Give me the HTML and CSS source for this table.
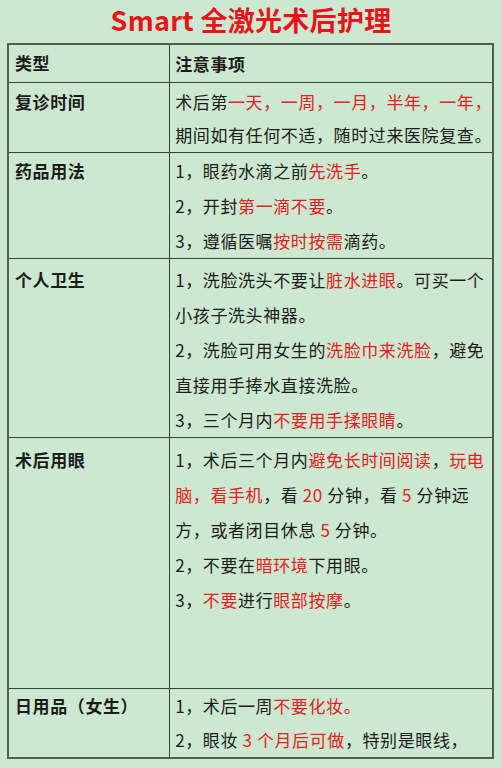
FILE: index.html
```html
<!DOCTYPE html>
<html lang="zh-CN">
<head>
<meta charset="utf-8">
<title>Smart 全激光术后护理</title>
<link rel="stylesheet" href="styles.css">
</head>
<body>
<h1 class="title">Smart 全激光术后护理</h1>
<table class="care">
  <tr class="head">
    <th class="c1">类型</th>
    <th class="c2">注意事项</th>
  </tr>
  <tr class="r1">
    <td class="c1">复诊时间</td>
    <td class="c2">
      <p>术后第<em>一天，一周，一月，半年，一年，</em><br>期间如有任何不适，随时过来医院复查。</p>
    </td>
  </tr>
  <tr class="r2">
    <td class="c1">药品用法</td>
    <td class="c2">
      <p>1，眼药水滴之前<em>先洗手</em>。</p>
      <p>2，开封<em>第一滴不要</em>。</p>
      <p>3，遵循医嘱<em>按时按需</em>滴药。</p>
    </td>
  </tr>
  <tr class="r3">
    <td class="c1">个人卫生</td>
    <td class="c2">
      <p>1，洗脸洗头不要让<em>脏水进眼</em>。可买一个<br>小孩子洗头神器。</p>
      <p>2，洗脸可用女生的<em>洗脸巾来洗脸</em>，避免<br>直接用手捧水直接洗脸。</p>
      <p>3，三个月内<em>不要用手揉眼睛</em>。</p>
    </td>
  </tr>
  <tr class="r4">
    <td class="c1">术后用眼</td>
    <td class="c2">
      <p>1，术后三个月内<em>避免长时间阅读</em>，<em>玩电<br>脑，看手机</em>，看 <em>20</em> 分钟，看 <em>5</em> 分钟远<br>方，或者闭目休息 <em>5</em> 分钟。</p>
      <p>2，不要在<em>暗环境</em>下用眼。</p>
      <p>3，<em>不要</em>进行<em>眼部按摩</em>。</p>
    </td>
  </tr>
  <tr class="r5">
    <td class="c1">日用品（女生）</td>
    <td class="c2">
      <p>1，术后一周<em>不要化妆。</em></p>
      <p>2，眼妆 <em>3 个月后可做</em>，特别是眼线，</p>
    </td>
  </tr>
</table>
</body>
</html>
```

FILE: styles.css
```css
html, body {
  margin: 0;
  padding: 0;
  background: #cde8d0;
}
body {
  font-family: "Noto Sans CJK SC", "Noto Sans", sans-serif;
  color: #1c1c1c;
  width: 502px;
  height: 768px;
  overflow: hidden;
}
.title {
  margin: 0;
  height: 43px;
  line-height: 40px;
  text-align: center;
  font-size: 27px;
  font-weight: 700;
  color: #e8141b;
  letter-spacing: 0.3px;
}
.care {
  margin-left: 7px;
  width: 487px;
  border-collapse: collapse;
  border: 2px solid #4f5f50;
  font-size: 17px;
  letter-spacing: 0.6px;
}
.care th, .care td {
  border: 1.5px solid #33443a;
  vertical-align: top;
  text-align: left;
  padding: 0;
}
.care .c1 {
  width: 155px;
  padding-left: 6px;
  font-weight: 700;
  line-height: 35px;
}
.care .c2 {
  padding-left: 5px;
  white-space: nowrap;
}
.head th {
  height: 37px;
  line-height: 37px;
  font-weight: 700;
}
.care p {
  margin: 0;
  line-height: 35px;
}
.care em {
  font-style: normal;
  color: #e3201f;
}
.r1 td { height: 67px; padding-top: 2px; line-height: 33px; }
.r1 p { line-height: 33px; }
.r1 .c1 { line-height: 33px; }
.r2 td { height: 105px; padding-top: 0; }
.r3 td { height: 175px; padding-top: 3px; }
.r4 td { height: 246px; padding-top: 4px; }
.r5 td { height: 68px; padding-top: 0; }
.r5 p, .r5 .c1 { line-height: 34px; }
```
